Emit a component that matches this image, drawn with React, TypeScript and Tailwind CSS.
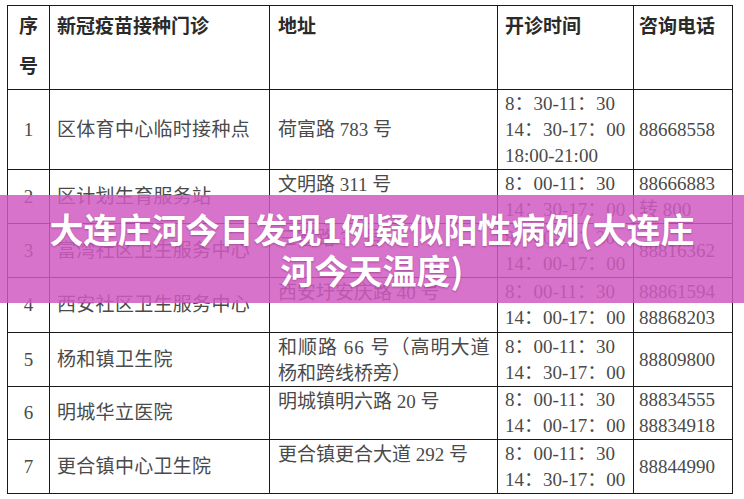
import type { ReactNode } from 'react'

const FONT = "font-['Liberation_Serif','Noto_Sans_CJK_SC',serif]"

type Row = {
  no: string
  name: string
  addr: ReactNode
  addrCenter?: boolean
  times: string[]
  phones: string[]
  h: string
}

const ROWS: Row[] = [
  { no: '1', name: '区体育中心临时接种点', addr: '荷富路 783 号', addrCenter: true, times: ['8：30-11：30', '14：30-17：00', '18:00-21:00'], phones: ['88668558'], h: '79px' },
  { no: '2', name: '区计划生育服务站', addr: '文明路 311 号', times: ['8：00-11：30', '14：30-17：00'], phones: ['88666883', '转 800'], h: '53px' },
  { no: '3', name: '富湾社区卫生服务中心', addr: '三富路 37 号', times: ['8：00-11：30', '14：00-17：00'], phones: ['88816362'], h: '53px' },
  { no: '4', name: '西安社区卫生服务中心', addr: '西安圩安庆路 40 号', times: ['8：00-11：30', '14：00-17：00'], phones: ['88861594', '88868203'], h: '54px' },
  {
    no: '5',
    name: '杨和镇卫生院',
    addr: (
      <>
        <span className="block whitespace-nowrap tracking-[1px]">和顺路 66 号（高明大道</span>
        <span className="block whitespace-nowrap">杨和跨线桥旁）</span>
      </>
    ),
    times: ['8：00-11：30', '14：30-17：00'],
    phones: ['88809800'],
    h: '53px',
  },
  { no: '6', name: '明城华立医院', addr: '明城镇明六路 20 号', times: ['8：00-11：30', '14：00-17：00'], phones: ['88834555', '88834918'], h: '52px' },
  { no: '7', name: '更合镇中心卫生院', addr: '更合镇更合大道 292 号', times: ['8：00-11：30', '14：30-17：00'], phones: ['88844990'], h: '53px' },
]

function Cell({ children, className = '' }: { children?: ReactNode; className?: string }) {
  return <div className={`bg-white text-[19px] leading-[26px] text-[#4a4a4a] ${className}`}>{children}</div>
}

export default function App() {
  return (
    <div className={`relative h-[499px] w-[744px] overflow-hidden bg-white ${FONT}`}>
      {/* Table */}
      <div
        className="absolute left-[7px] top-[5px] grid w-[726px] gap-px bg-[#1a1a1a] p-px"
        style={{
          gridTemplateColumns: '41px 219px 227px 135px 98px',
          gridTemplateRows: ['83px', ...ROWS.map(r => r.h)].join(' '),
        }}
      >
        {/* Header */}
        <div className="bg-white pt-px text-center text-[19px] font-bold leading-[40px] text-[#2a2a2a]">
          <div>序</div>
          <div>号</div>
        </div>
        <div className="bg-white pl-[7px] pt-px text-[19px] font-bold leading-[40px] text-[#2a2a2a]">新冠疫苗接种门诊</div>
        <div className="bg-white pl-[8px] pt-px text-[19px] font-bold leading-[40px] text-[#2a2a2a]">地址</div>
        <div className="bg-white pl-[7px] pt-px text-[19px] font-bold leading-[40px] text-[#2a2a2a]">开诊时间</div>
        <div className="bg-white pl-[5px] pt-px text-[19px] font-bold leading-[40px] text-[#2a2a2a]">咨询电话</div>

        {ROWS.map(r => (
          <div key={r.no} className="contents">
            <Cell className="flex items-center justify-center">{r.no}</Cell>
            <Cell className="flex items-center pl-[7px] tracking-[0.3px]">{r.name}</Cell>
            <Cell className={`pl-[8px] ${r.addrCenter ? 'flex items-center' : 'pt-[2px]'}`}>
              <div>{r.addr}</div>
            </Cell>
            <Cell className="flex flex-col justify-center pl-[7px]">
              {r.times.map(t => (
                <span key={t}>{t}</span>
              ))}
            </Cell>
            <Cell className="flex flex-col justify-center pl-[5px]">
              {r.phones.map(p => (
                <span key={p}>{p}</span>
              ))}
            </Cell>
          </div>
        ))}
      </div>

      {/* Headline banner */}
      <div className="absolute left-0 top-[195px] flex h-[108px] w-full items-center justify-center bg-[rgba(208,90,193,0.85)]">
        <h1 className="text-center font-['Noto_Sans_CJK_SC',sans-serif] text-[34px] font-bold leading-[41px] text-white [text-shadow:0_1px_2px_rgba(80,0,70,0.35)]">
          大连庄河今日发现1例疑似阳性病例(大连庄
          <br />
          河今天温度)
        </h1>
      </div>
    </div>
  )
}
